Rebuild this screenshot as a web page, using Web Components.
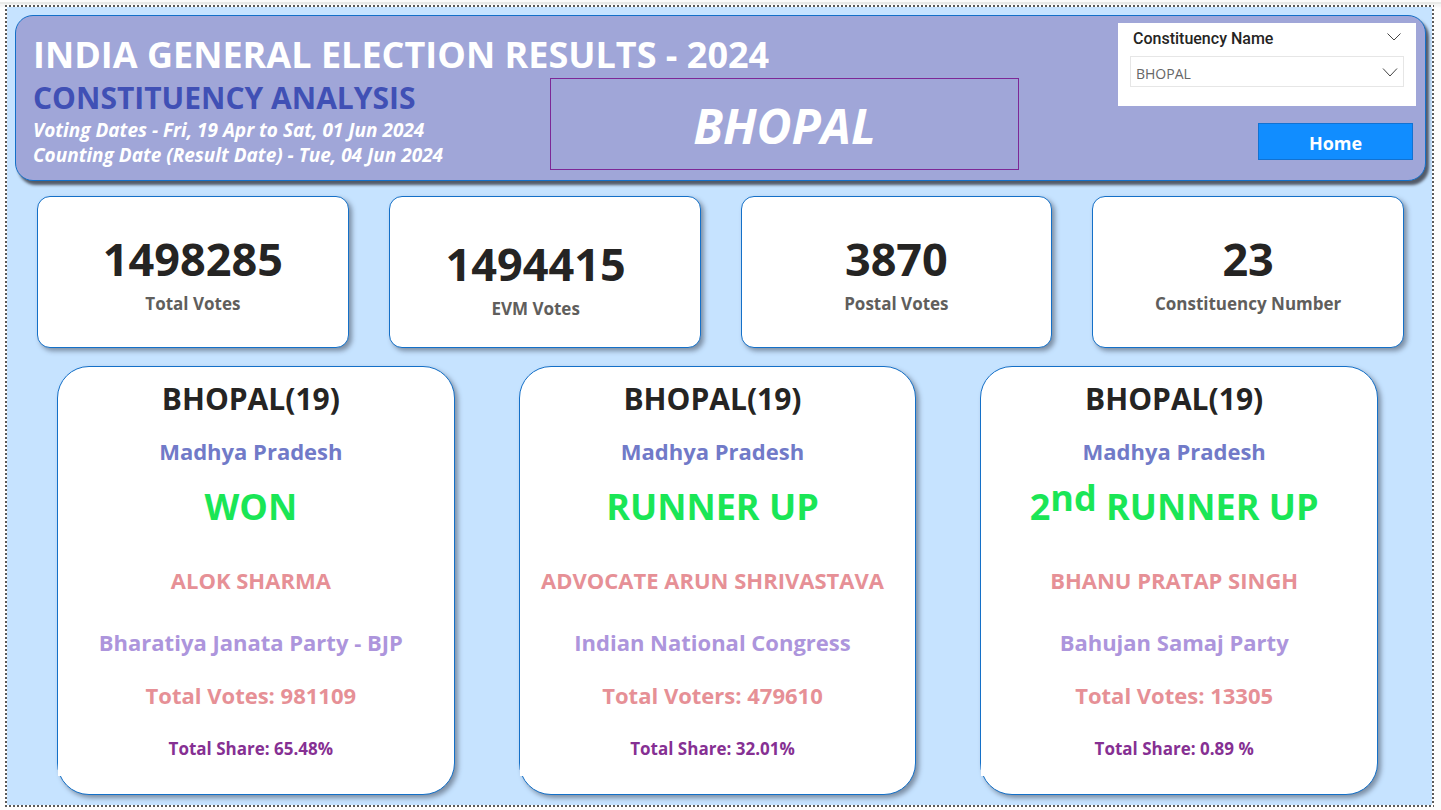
<!DOCTYPE html>
<html lang="en">
<head>
<meta charset="utf-8">
<title>India General Election Results - 2024</title>
<style>
  body {
    margin: 0;
    background: #fdfdfd;
    font-family: "Open Sans", "Noto Sans", sans-serif;
    color: #252423;
  }
</style>
</head>
<body>
<report-canvas>
  <report-header slot="header"></report-header>
  <kpi-card slot="kpis" value="1498285">Total Votes</kpi-card>
  <kpi-card slot="kpis" value="1494415" inset>EVM Votes</kpi-card>
  <kpi-card slot="kpis" value="3870">Postal Votes</kpi-card>
  <kpi-card slot="kpis" value="23">Constituency Number</kpi-card>
  <result-card slot="results">
    <span slot="seat">BHOPAL(19)</span>
    <span slot="state">Madhya Pradesh</span>
    <span slot="status">WON</span>
    <span slot="name">ALOK SHARMA</span>
    <span slot="party">Bharatiya Janata Party - BJP</span>
    <span slot="votes">Total Votes: 981109</span>
    <span slot="share">Total Share: 65.48%</span>
  </result-card>
  <result-card slot="results">
    <span slot="seat">BHOPAL(19)</span>
    <span slot="state">Madhya Pradesh</span>
    <span slot="status">RUNNER UP</span>
    <span slot="name">ADVOCATE ARUN SHRIVASTAVA</span>
    <span slot="party">Indian National Congress</span>
    <span slot="votes">Total Voters: 479610</span>
    <span slot="share">Total Share: 32.01%</span>
  </result-card>
  <result-card slot="results">
    <span slot="seat">BHOPAL(19)</span>
    <span slot="state">Madhya Pradesh</span>
    <span slot="status">2<rank-suffix>nd</rank-suffix> RUNNER UP</span>
    <span slot="name">BHANU PRATAP SINGH</span>
    <span slot="party">Bahujan Samaj Party</span>
    <span slot="votes">Total Votes: 13305</span>
    <span slot="share">Total Share: 0.89 %</span>
  </result-card>
</report-canvas>

<script>
class BaseElement extends HTMLElement {
  constructor() {
    super();
    this.attachShadow({ mode: 'open' }).innerHTML = this.render();
  }
}

customElements.define('rank-suffix', class extends BaseElement {
  render() {
    return `<style>:host { display: inline; vertical-align: 9px; line-height: 0; }</style><slot></slot>`;
  }
});

customElements.define('report-canvas', class extends BaseElement {
  render() {
    return `
      <style>
        :host { display: block; padding: 5px 7px 3px 5px;
          background: linear-gradient(#fdfdfd 0 2px, #e9eae8 2px 4px, #f5f5f5 4px 6px, transparent 8px); }
        /* square-dotted page outline */
        main {
          padding: 10px 10px 12px;
          background:
            repeating-linear-gradient(90deg, #5a5a5a 0 2px, #fff 2px 4px) top / 100% 2px no-repeat,
            repeating-linear-gradient(90deg, #5a5a5a 0 2px, #fff 2px 4px) bottom / 100% 2px no-repeat,
            repeating-linear-gradient(#5a5a5a 0 2px, #fff 2px 4px) left / 2px 100% no-repeat,
            repeating-linear-gradient(#5a5a5a 0 2px, #fff 2px 4px) right / 2px 100% no-repeat,
            #c6e3ff;
        }
        .kpis { display: grid; grid-template-columns: repeat(4, minmax(0, 1fr)); gap: 40px; padding: 15px 20px 0 22px; }
        .results { display: grid; grid-template-columns: repeat(3, minmax(0, 1fr)); gap: 64px; padding: 18px 46px 0 42px; }
      </style>
      <main>
        <slot name="header"></slot>
        <section class="kpis" aria-label="Votes"><slot name="kpis"></slot></section>
        <section class="results" aria-label="Results"><slot name="results"></slot></section>
      </main>`;
  }
});

customElements.define('report-header', class extends BaseElement {
  render() {
    return `
      <style>
        :host { display: block; }
        header {
          display: grid;
          grid-template-columns: minmax(0, 517fr) minmax(0, 469fr) minmax(0, 397fr);
          grid-template-rows: 55px minmax(92px, auto);
          margin-right: -2px;
          padding: 7px 9px 10px 17px;
          background: #a0a6d8;
          border: 1px solid #1470c8;
          border-radius: 18px;
          box-shadow: 3px 4px 3px #525a68;
        }
        h1, h2, p { margin: 0; white-space: nowrap; font-weight: 700; }
        h1 { grid-column: 1 / 3; align-self: end; font-size: 36px; line-height: 46px; color: #fff; }
        h2 { font-size: 30px; line-height: 40px; color: #4050b5; }
        p { font-size: 19px; line-height: 25px; font-style: italic; color: #fff; }
        .seat {
          display: grid; place-items: center; padding-top: 3px;
          border: 1px solid #7d2896; box-sizing: border-box;
          font-size: 48px; line-height: 64px; font-weight: 700; font-style: italic; color: #fff;
        }
        aside { grid-column: 3; grid-row: 1 / 3; display: flex; flex-direction: column; align-items: flex-end; gap: 17px; }
      </style>
      <header>
        <h1>INDIA GENERAL ELECTION RESULTS - 2024</h1>
        <div>
          <h2>CONSTITUENCY ANALYSIS</h2>
          <p>Voting Dates - Fri, 19 Apr to Sat, 01 Jun 2024</p>
          <p>Counting Date (Result Date) - Tue, 04 Jun 2024</p>
        </div>
        <div class="seat">BHOPAL</div>
        <aside>
          <seat-slicer></seat-slicer>
          <home-button>Home</home-button>
        </aside>
      </header>`;
  }
});

customElements.define('seat-slicer', class extends BaseElement {
  render() {
    return `
      <style>
        :host { display: block; box-sizing: border-box; width: 298px; height: 83px; padding: 3px 12px 0; background: #fff; }
        .title { display: flex; justify-content: space-between; align-items: center; padding: 0 3px; height: 25px;
          font: 500 16px/25px Roboto, sans-serif; color: #252423; }
        .title svg { display: block; margin-top: -4px; }
        .box { position: relative; margin-top: 5px; }
        select {
          display: block; width: 100%; height: 31px; box-sizing: border-box; padding: 4px 28px 0 5px;
          appearance: none; border: 1px solid #e6e6e6; border-radius: 0; background: #fff;
          font: 400 14px/20px "Open Sans", sans-serif; color: #666;
        }
        .box svg { position: absolute; right: 6px; top: 12px; pointer-events: none; }
        path { fill: none; stroke: #444; }
      </style>
      <div class="title"><label for="seat">Constituency Name</label>
        <svg width="14" height="8" viewBox="0 0 14 8"><path d="M.5 .5 7 7 13.5 .5"/></svg></div>
      <div class="box">
        <select id="seat"><option>BHOPAL</option></select>
        <svg width="16" height="9" viewBox="0 0 16 9"><path d="M1 .5 8 8 15 .5"/></svg>
      </div>`;
  }
});

customElements.define('home-button', class extends BaseElement {
  render() {
    return `
      <style>
        :host { display: block; margin-right: 3px; }
        button { display: block; width: 155px; height: 37px; box-sizing: border-box; padding: 3px 0 0;
          border: 1px solid #1272d2; background: #118dff; color: #fff;
          font: 700 18px/24px "Open Sans", sans-serif; }
      </style>
      <button type="button"><slot></slot></button>`;
  }
});

customElements.define('kpi-card', class extends BaseElement {
  render() {
    return `
      <style>
        :host { display: flex; flex-direction: column; justify-content: center; align-items: center;
          box-sizing: border-box; height: 152px; padding: 20px 0 10px;
          background: #fff; border: 1px solid #1470c8; border-radius: 13px;
          box-shadow: 3px 3px 5px #7c8ea4; }
        :host([inset]) { padding: 30px 18px 10px 0; }
        .value { font-size: 45px; line-height: 54px; font-weight: 700; }
        .label { font-size: 17px; line-height: 36px; font-weight: 700; color: #605e5c; }
      </style>
      <div class="value"></div>
      <div class="label"><slot></slot></div>`;
  }
  connectedCallback() {
    this.shadowRoot.querySelector('.value').textContent = this.getAttribute('value');
  }
});

customElements.define('result-card', class extends BaseElement {
  render() {
    return `
      <style>
        :host { display: block; padding: 7px 10px 18px 0;
          background: #fff; border: 1px solid #1470c8; border-radius: 32px;
          box-shadow: 3px 3px 5px #7c8ea4;
          text-align: center; font-weight: 700; white-space: nowrap; }
        .seat { font-size: 30px; line-height: 50px; }
        .state { font-size: 22px; line-height: 54px; color: #717ac8; }
        .status { font-size: 36px; line-height: 58px; color: #1ae656; }
        .details { margin-top: 8px; background: #fff; font-size: 22px; line-height: 54px; color: #e69096; }
        .name { line-height: 72px; }
        .party { line-height: 52px; color: #ad95dc; }
        .share { font-size: 17px; color: #863093; }
      </style>
      <div class="seat"><slot name="seat"></slot></div>
      <div class="state"><slot name="state"></slot></div>
      <div class="status"><slot name="status"></slot></div>
      <div class="details">
        <div class="name"><slot name="name"></slot></div>
        <div class="party"><slot name="party"></slot></div>
        <div class="votes"><slot name="votes"></slot></div>
        <div class="share"><slot name="share"></slot></div>
      </div>`;
  }
});
</script>
</body>
</html>
